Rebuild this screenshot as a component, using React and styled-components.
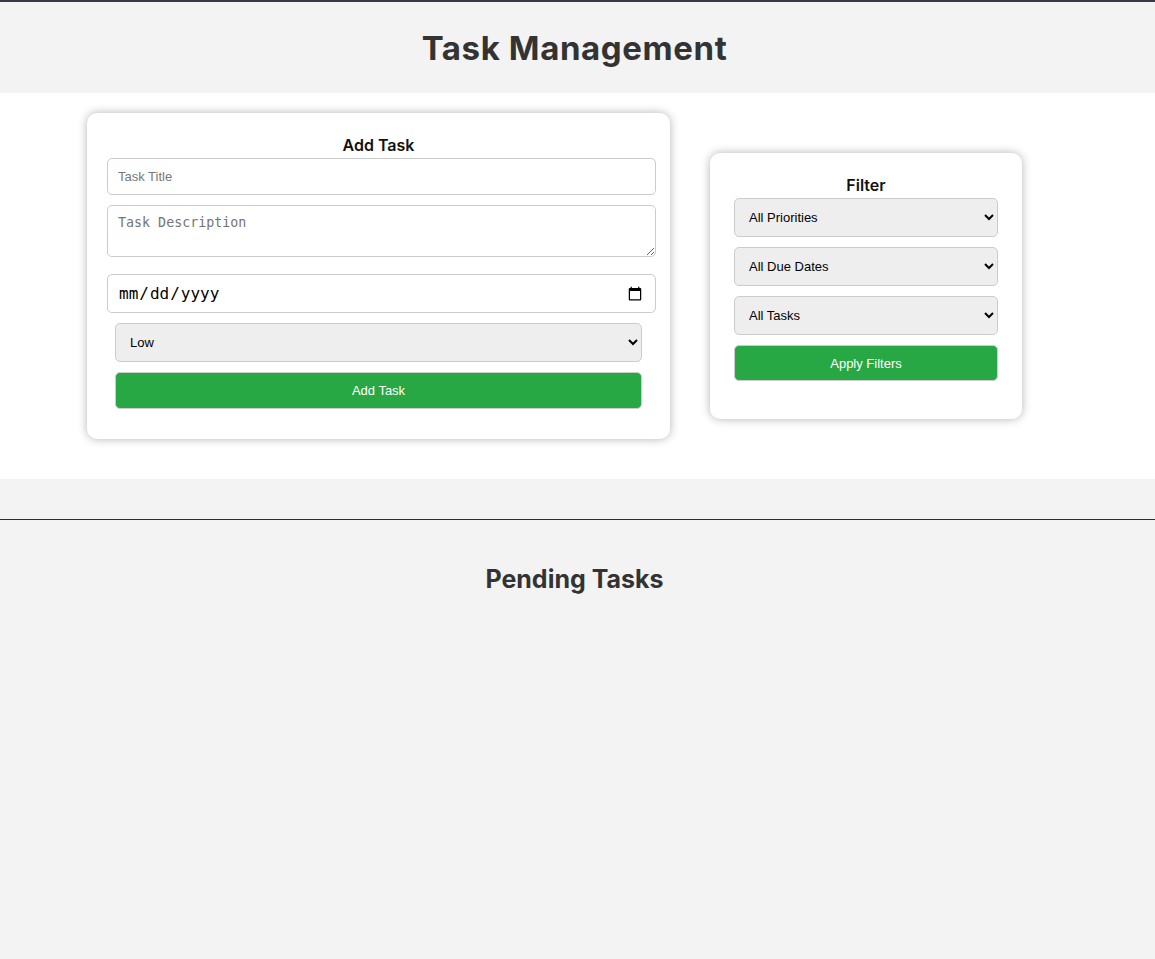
import React from 'react';
import styled, { createGlobalStyle } from 'styled-components';

const GlobalStyle = createGlobalStyle`
  html, body {
    margin: 0;
    padding: 0;
    background-color: #f3f3f3;
    font-family: "Liberation Sans", Arial, sans-serif;
  }
  * {
    box-sizing: border-box;
  }
`;

const headingFont = `"Inter", "Open Sans", sans-serif`;

const Header = styled.header`
  height: 93px;
  border-top: 2px solid #3b3644;
  display: flex;
  align-items: center;
  justify-content: center;
  background-color: #f3f3f3;
`;

const PageTitle = styled.h1`
  margin: 0 6px 0 0;
  font-family: ${headingFont};
  font-size: 33px;
  font-weight: 700;
  letter-spacing: 0.6px;
  color: #333;
`;

const Main = styled.section`
  display: flex;
  align-items: flex-start;
  gap: 40px;
  padding: 20px 0 40px 87px;
  background-color: #fff;
`;

const Card = styled.div`
  width: ${p => p.width}px;
  margin-top: ${p => p.offset || 0}px;
  padding: ${p => p.pad};
  border-radius: 10px;
  background-color: #fff;
  box-shadow: 0 0 10px rgba(0, 0, 0, 0.3);
  display: flex;
  flex-direction: column;
`;

const CardTitle = styled.h2`
  margin: 0 ${p => p.shift || 0}px 0 0;
  text-align: center;
  font-family: ${headingFont};
  font-size: 16px;
  font-weight: 600;
  line-height: 20px;
  color: #111;
`;

const TextInput = styled.input`
  height: 37px;
  margin-top: 3px;
  padding: 0 10px;
  border: 1px solid #ccc;
  border-radius: 5px;
  font-family: "Liberation Sans", Arial, sans-serif;
  font-size: 13px;
  outline: none;

  &::placeholder {
    color: #777;
  }
`;

const TextArea = styled.textarea`
  height: 52px;
  margin-top: 10px;
  padding: 9px 10px;
  border: 1px solid #ccc;
  border-radius: 5px;
  font-family: "DejaVu Sans Mono", monospace;
  font-size: 13.33px;
  outline: none;

  &::placeholder {
    color: #757575;
  }
`;

const DateInput = styled.input`
  height: 39px;
  margin-top: 17px;
  padding: 0 10px;
  border: 1px solid #ccc;
  border-radius: 5px;
  font-family: "DejaVu Sans Mono", monospace;
  font-size: 16px;
  color: #000;
`;

const Select = styled.select`
  height: 39px;
  margin: ${p => p.inset ? '10px 14px 0 8px' : `${p.first ? 3 : 10}px 0 0`};
  padding: 0 10px;
  border: 1px solid #ccc;
  border-radius: 5px;
  background-color: #eee;
  font-family: "Liberation Sans", Arial, sans-serif;
  font-size: 13px;
  color: #000;
`;

const GreenButton = styled.button`
  height: ${p => p.h || 37}px;
  margin: ${p => p.inset ? '10px 14px 0 8px' : '10px 0 0'};
  border: 1px solid #ccc;
  border-radius: 5px;
  background-color: #28a745;
  color: #fff;
  font-family: "Liberation Sans", Arial, sans-serif;
  font-size: 13px;
`;

const Divider = styled.div`
  height: 1px;
  background-color: #5a0d63;
  margin-top: 40px;
`;

const Pending = styled.section`
  padding-top: 44px;
  min-height: 440px;
  text-align: center;
`;

const SubTitle = styled.h2`
  margin: 0 6px 0 0;
  font-family: ${headingFont};
  font-size: 25px;
  font-weight: 700;
  color: #333;
`;

const App = () => (
  <>
    <GlobalStyle />
    <Header>
      <PageTitle>Task Management</PageTitle>
    </Header>
    <Main>
      <Card width={583} pad="22px 14px 30px 20px">
        <CardTitle shift={6}>Add Task</CardTitle>
        <TextInput placeholder="Task Title" />
        <TextArea placeholder="Task Description" />
        <DateInput type="date" />
        <Select inset defaultValue="low">
          <option value="low">Low</option>
          <option value="medium">Medium</option>
          <option value="high">High</option>
        </Select>
        <GreenButton inset>Add Task</GreenButton>
      </Card>
      <Card width={312} offset={40} pad="22px 24px 38px">
        <CardTitle>Filter</CardTitle>
        <Select first defaultValue="all">
          <option value="all">All Priorities</option>
        </Select>
        <Select defaultValue="all">
          <option value="all">All Due Dates</option>
        </Select>
        <Select defaultValue="all">
          <option value="all">All Tasks</option>
        </Select>
        <GreenButton h={36}>Apply Filters</GreenButton>
      </Card>
    </Main>
    <Divider />
    <Pending>
      <SubTitle>Pending Tasks</SubTitle>
    </Pending>
  </>
);

export default App;
